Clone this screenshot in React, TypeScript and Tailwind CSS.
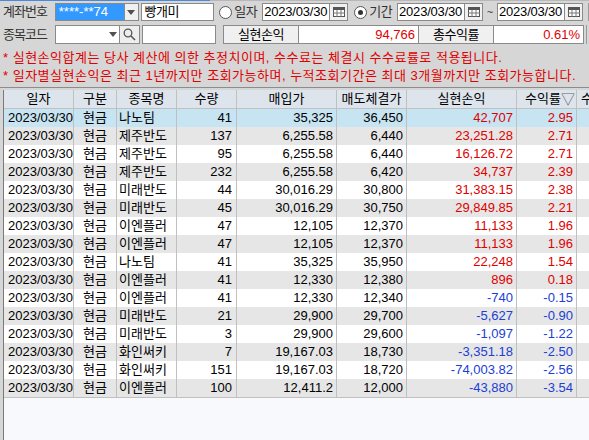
import React from 'react';

type Row = [string, string, string, string, string, string, string];

const rows: Row[] = [
  ['나노팀', '41', '35,325', '36,450', '42,707', '2.95', 'up'],
  ['제주반도', '137', '6,255.58', '6,440', '23,251.28', '2.71', 'up'],
  ['제주반도', '95', '6,255.58', '6,440', '16,126.72', '2.71', 'up'],
  ['제주반도', '232', '6,255.58', '6,420', '34,737', '2.39', 'up'],
  ['미래반도', '44', '30,016.29', '30,800', '31,383.15', '2.38', 'up'],
  ['미래반도', '45', '30,016.29', '30,750', '29,849.85', '2.21', 'up'],
  ['이엔플러', '47', '12,105', '12,370', '11,133', '1.96', 'up'],
  ['이엔플러', '47', '12,105', '12,370', '11,133', '1.96', 'up'],
  ['나노팀', '41', '35,325', '35,950', '22,248', '1.54', 'up'],
  ['이엔플러', '41', '12,330', '12,380', '896', '0.18', 'up'],
  ['이엔플러', '41', '12,330', '12,340', '-740', '-0.15', 'down'],
  ['미래반도', '21', '29,900', '29,700', '-5,627', '-0.90', 'down'],
  ['미래반도', '3', '29,900', '29,600', '-1,097', '-1.22', 'down'],
  ['화인써키', '7', '19,167.03', '18,730', '-3,351.18', '-2.50', 'down'],
  ['화인써키', '151', '19,167.03', '18,720', '-74,003.82', '-2.56', 'down'],
  ['이엔플러', '100', '12,411.2', '12,000', '-43,880', '-3.54', 'down'],
];

const cols = 'grid grid-cols-[70px_43px_60px_60px_100px_70px_110px_60px_1fr]';
const cell = 'border-r border-[#c0c0c0] flex items-center overflow-hidden whitespace-nowrap';

function DropArrow() {
  return (
    <svg width="8" height="5" viewBox="0 0 8 5">
      <path d="M0 0h8L4 5z" fill="#505050" />
    </svg>
  );
}

function CalButton() {
  return (
    <div className="w-[18px] h-full bg-[#f0f0f0] border border-l-0 border-[#8a8a8a] flex items-center justify-center">
      <svg width="12" height="10" viewBox="0 0 12 10">
        <rect x="0.5" y="0.5" width="11" height="9" fill="#fff" stroke="#555" />
        <rect x="0.5" y="0.5" width="11" height="2.5" fill="#555" />
        <path d="M4 3v7M8 3v7M0 6h12" stroke="#777" strokeWidth="1" />
      </svg>
    </div>
  );
}

function Radio({ on }: { on?: boolean }) {
  return (
    <div className="w-[13px] h-[13px] rounded-full border border-[#555] bg-white flex items-center justify-center">
      {on && <div className="w-[5px] h-[5px] rounded-full bg-[#333]" />}
    </div>
  );
}

function DateBox() {
  return (
    <div className="flex h-full">
      <div className="w-[68px] h-full bg-white border border-[#8a8a8a] flex items-center pl-[1px] text-[13px] tracking-[-0.2px]">2023/03/30</div>
      <CalButton />
    </div>
  );
}

export default function App() {
  return (
    <div className="w-[589px] h-[440px] bg-[#d6d6d6] overflow-hidden font-['Liberation_Sans','Noto_Sans_CJK_KR',sans-serif] text-black">
      <div className="flex h-[1px]">
        <div className="w-[210px] bg-[#4a8ad8]" />
        <div className="flex-1 bg-[#b8b8b8]" />
      </div>

      {/* row 1 */}
      <div className="flex items-center h-[18px] mt-[2px] pl-[3px]">
        <div className="w-[52px] text-[13px] text-[#333] tracking-[-1px]">계좌번호</div>
        <div className="w-[70px] h-full bg-[#3399ff] border border-[#8a8a8a] text-white text-[13px] flex items-center pl-[3px]">****-**74</div>
        <div className="w-[14px] h-full bg-[#f0f0f0] border border-l-0 border-[#8a8a8a] flex items-center justify-center">
          <DropArrow />
        </div>
        <div className="w-[74px] h-full ml-[2px] bg-white border border-[#8a8a8a] text-[13px] tracking-[-0.5px] flex items-center pl-[3px]">빵개미</div>
        <div className="ml-[5px]"><Radio /></div>
        <div className="ml-[2px] text-[13px] text-[#333] tracking-[-0.5px] w-[28px]">일자</div>
        <DateBox />
        <div className="ml-[6px]"><Radio on /></div>
        <div className="ml-[2px] text-[13px] text-[#333] tracking-[-0.5px] w-[28px]">기간</div>
        <DateBox />
        <div className="w-[14px] text-center text-[11px] text-[#333]">~</div>
        <DateBox />
        <div className="ml-[5px] w-px h-full bg-[#9a9a9a]" />
      </div>

      {/* row 2 */}
      <div className="flex items-center h-[19px] mt-[4px] pl-[3px]">
        <div className="w-[52px] text-[13px] text-[#333] tracking-[-1px]">종목코드</div>
        <div className="w-[65px] h-full bg-white border border-[#8a8a8a] flex items-center justify-end pr-[2px]">
          <DropArrow />
        </div>
        <div className="w-[20px] h-full bg-[#eeeeee] border border-l-0 border-[#8a8a8a] flex items-center justify-center">
          <svg width="13" height="13" viewBox="0 0 13 13">
            <circle cx="5" cy="5" r="3.8" fill="none" stroke="#555" strokeWidth="1.3" />
            <path d="M8 8l4 4" stroke="#555" strokeWidth="1.6" />
          </svg>
        </div>
        <div className="w-[74px] h-full ml-[2px] bg-white border border-[#8a8a8a]" />
        <div className="ml-[7px] w-[76px] h-full bg-[#f0f0f0] border border-[#8a8a8a] text-[13px] tracking-[-0.5px] flex items-center justify-center">실현손익</div>
        <div className="w-[120px] h-full bg-white border border-l-0 border-[#8a8a8a] text-[13px] text-[#e00000] flex items-center justify-end pr-[3px]">94,766</div>
        <div className="w-[75px] h-full bg-[#f0f0f0] border border-l-0 border-[#8a8a8a] text-[13px] tracking-[-0.5px] flex items-center justify-center">총수익률</div>
        <div className="w-[90px] h-full bg-white border border-l-0 border-[#8a8a8a] text-[13px] text-[#e00000] flex items-center justify-end pr-[3px]">0.61%</div>
        <div className="ml-[2px] w-px h-full bg-[#9a9a9a]" />
      </div>

      <div className="pl-[3px] mt-[5px] text-[13px] tracking-[0.5px] text-[#e00000] leading-[18px] whitespace-nowrap">
        <div>* 실현손익합계는 당사 계산에 의한 추정치이며, 수수료는 체결시 수수료률로 적용됩니다.</div>
        <div>* 일자별실현손익은 최근 1년까지만 조회가능하며, 누적조회기간은 최대 3개월까지만 조회가능합니다.</div>
      </div>

      {/* grid */}
      <div className="mt-[2px] border-t border-[#8c8c8c] pt-[2px] pl-[3px]">
        <div className="border-l border-[#7a7a7a] h-[352px] bg-[#f8f9fc]">
          <div className={`${cols} h-[19px] bg-[#dde4ec] border-b border-[#c0c0c0] text-[13px]`}>
            <div className={`${cell} justify-center`}>일자</div>
            <div className={`${cell} justify-center`}>구분</div>
            <div className={`${cell} justify-center`}>종목명</div>
            <div className={`${cell} justify-center`}>수량</div>
            <div className={`${cell} justify-center`}>매입가</div>
            <div className={`${cell} justify-center`}>매도체결가</div>
            <div className={`${cell} justify-center`}>실현손익</div>
            <div className={`${cell} justify-end pr-[1px]`}>
              수익률<span className="text-[#666] text-[14px] leading-none">▽</span>
            </div>
            <div className={`${cell} pl-[4px] border-r-0`}>수</div>
          </div>
          <div className="border-b border-[#c0c0c0]">
            {rows.map((r, i) => {
              const bg = i === 0 ? 'bg-[#c6e4f1]' : i % 2 === 1 ? 'bg-[#e6e6e6]' : 'bg-white';
              const tone = r[6] === 'up' ? 'text-[#e00000]' : 'text-[#1a40d6]';
              return (
                <div key={i} className={`${cols} h-[18px] text-[13px] ${bg}`}>
                  <div className={`${cell} pl-[4px]`}>2023/03/30</div>
                  <div className={`${cell} justify-center`}>현금</div>
                  <div className={`${cell} pl-[2px]`}>{r[0]}</div>
                  <div className={`${cell} justify-end pr-[4px]`}>{r[1]}</div>
                  <div className={`${cell} justify-end pr-[3px]`}>{r[2]}</div>
                  <div className={`${cell} justify-end pr-[3px]`}>{r[3]}</div>
                  <div className={`${cell} justify-end pr-[3px] ${tone}`}>{r[4]}</div>
                  <div className={`${cell} justify-end pr-[3px] ${tone}`}>{r[5]}</div>
                  <div className={`${cell} border-r-0`} />
                </div>
              );
            })}
          </div>
        </div>
      </div>
    </div>
  );
}
